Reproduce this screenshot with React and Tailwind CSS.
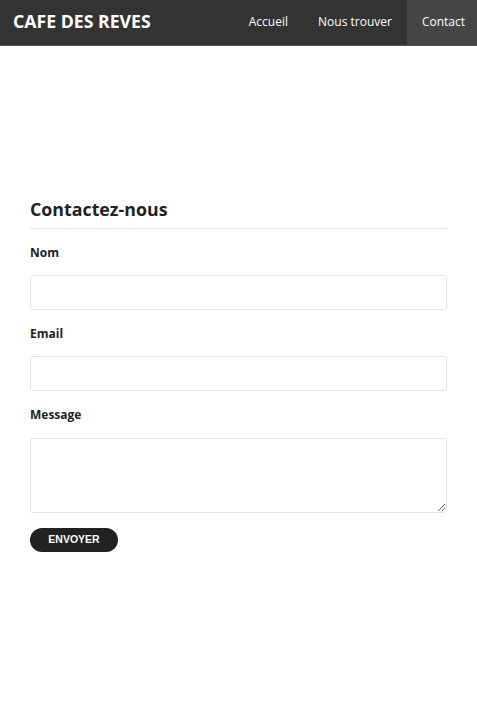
export default function App() {
  return (
    <div className="min-h-[719px] bg-white" style={{ fontFamily: '"Open Sans", sans-serif' }}>
      <nav className="flex h-[46px] items-stretch justify-between bg-[#333333] border-b border-[#555]">
        <div className="flex items-center pb-[2px] pl-[13px] text-[17.7px] font-bold text-white">CAFE DES REVES</div>
        <div className="flex items-stretch text-[12px] text-white">
          <a className="flex items-center px-[15px] pb-[2px]">Accueil</a>
          <a className="flex items-center px-[15px] pb-[2px]">Nous trouver</a>
          <a className="flex items-center bg-[#454545] pb-[2px] pl-[15px] pr-[12px]">Contact</a>
        </div>
      </nav>
      <main className="px-[30px] pt-[150px]">
        <h2 className="text-[17.8px] font-bold leading-[26px] text-[#222]">Contactez-nous</h2>
        <div className="mt-[6px] h-px bg-[#e3e3e3]" />
        <form className="flex flex-col">
          <label className="mt-[15px] text-[12px] font-bold leading-[17px] text-[#222]">Nom</label>
          <input className="mt-[14px] h-[35px] rounded-[3px] border border-[#e3e3e3] px-2" />
          <label className="mt-[15px] text-[12px] font-bold leading-[17px] text-[#222]">Email</label>
          <input className="mt-[14px] h-[35px] rounded-[3px] border border-[#e3e3e3] px-2" />
          <label className="mt-[15px] text-[12px] font-bold leading-[17px] text-[#222]">Message</label>
          <textarea className="mt-[15px] h-[75px] rounded-[3px] border border-[#e3e3e3] px-2" />
          <button
            type="button"
            className="mt-[15px] h-[24px] w-[88px] rounded-full bg-[#222222] text-[10.5px] font-bold text-white"
            style={{ fontFamily: '"Liberation Sans", Arial, sans-serif' }}
          >
            ENVOYER
          </button>
        </form>
      </main>
    </div>
  );
}
